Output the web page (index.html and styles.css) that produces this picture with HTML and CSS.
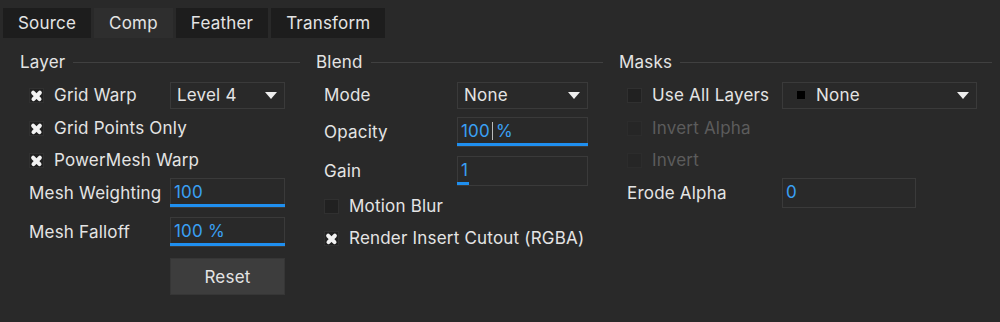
FILE: index.html
```html
<!DOCTYPE html>
<html lang="en">
<head>
    <meta charset="UTF-8">
    <title>Comp</title>
    <link rel="stylesheet" href="styles.css">
</head>
<body>
    <div id="tabs">
        <a href="#" class="tab">Source</a>
        <a href="#" class="tab on">Comp</a>
        <a href="#" class="tab">Feather</a>
        <a href="#" class="tab">Transform</a>
    </div>
    <div id="panel">
        <!-- Layer -->
        <div class="col">
            <div class="head"><span>Layer</span></div>
            <div class="row r-drop">
                <label class="chk"><span class="box x"></span>Grid Warp</label>
                <div class="drop"><span>Level 4</span><i class="arrow"></i></div>
            </div>
            <div class="row r-chk"><label class="chk"><span class="box x"></span>Grid Points Only</label></div>
            <div class="row r-chk"><label class="chk"><span class="box x"></span>PowerMesh Warp</label></div>
            <div class="row r-input">
                <span class="lbl">Mesh Weighting</span>
                <div class="field"><span class="val">100</span><b class="bar full"></b></div>
            </div>
            <div class="row r-input m5">
                <span class="lbl">Mesh Falloff</span>
                <div class="field"><span class="val">100 %</span><b class="bar full"></b></div>
            </div>
            <div class="row r-btn">
                <span class="lbl"></span>
                <button class="btn">Reset</button>
            </div>
        </div>

        <!-- Blend -->
        <div class="col blend">
            <div class="head"><span>Blend</span></div>
            <div class="row r-drop">
                <span class="lbl">Mode</span>
                <div class="drop"><span>None</span><i class="arrow"></i></div>
            </div>
            <div class="row r-input m3">
                <span class="lbl">Opacity</span>
                <div class="field"><span class="val">100<i class="caret"></i>%</span><b class="bar full"></b></div>
            </div>
            <div class="row r-input m5">
                <span class="lbl">Gain</span>
                <div class="field"><span class="val">1</span><b class="bar" style="width:12px"></b></div>
            </div>
            <div class="row r-chk m2"><label class="chk"><span class="box"></span>Motion Blur</label></div>
            <div class="row r-chk"><label class="chk"><span class="box x"></span>Render Insert Cutout (RGBA)</label></div>
        </div>

        <!-- Masks -->
        <div class="col masks">
            <div class="head"><span>Masks</span></div>
            <div class="row r-drop">
                <label class="chk"><span class="box"></span>Use All Layers</label>
                <div class="drop"><i class="swatch"></i><span>None</span><i class="arrow"></i></div>
            </div>
            <div class="row r-chk"><label class="chk off"><span class="box"></span>Invert Alpha</label></div>
            <div class="row r-chk"><label class="chk off"><span class="box"></span>Invert</label></div>
            <div class="row r-input">
                <span class="lbl">Erode Alpha</span>
                <div class="field short"><span class="val">0</span></div>
            </div>
        </div>
    </div>
</body>
</html>
```

FILE: styles.css
```css
* { margin:0; padding:0; box-sizing: border-box;}
body {
    background-color: #292929;
    color: #e4e4e4;
    font-family: Inter, "Open Sans", sans-serif;
    font-size: 17px;
    letter-spacing: 0.2px;
    width: 1000px;
    height: 322px;
    overflow: hidden;
}
#tabs {
    display: flex;
    gap: 3px;
    padding: 8px 0 0 3px;
    height: 38px;
}
.tab {
    display: flex;
    align-items: center;
    padding: 0 15px;
    height: 30px;
    background-color: #1d1d1d;
    color: #e4e4e4;
    text-decoration: none;
}
.tab.on {
    background-color: #2e2e2e;
}
#panel {
    display: grid;
    grid-template-columns: 296px 303px 1fr;
    padding: 12px 0 0 12px;
}
.col {
    display: flex;
    flex-direction: column;
    gap: 4px;
    padding-right: 8px;
}
.head {
    display: flex;
    align-items: center;
    gap: 8px;
    height: 24px;
    padding-left: 8px;
    margin-bottom: 2px;
}
.head::after {
    content: "";
    flex: 1;
    height: 1px;
    background-color: #404040;
}
.row {
    display: flex;
    align-items: center;
    padding-left: 17px;
}
.blend .row, .masks .row { padding-left: 16px;}
.r-drop { height: 30px;}
.r-chk { height: 28px;}
.r-input { height: 30px;}
.r-btn { height: 37px; margin-top: 7px;}
.m2 { margin-top: 2px;}
.m3 { margin-top: 3px;}
.m5 { margin-top: 5px;}

.lbl, .row > .chk {
    width: 141px;
    flex-shrink: 0;
}
.blend .lbl { width: 133px;}
.masks .lbl, .masks .row > .chk { width: 155px;}
.r-chk > .chk { width: auto;}

.chk {
    display: flex;
    align-items: center;
    gap: 10px;
    white-space: nowrap;
}
.chk.off { color: #5c5c5c;}
.box {
    width: 15px;
    height: 15px;
    background-color: #212121;
    border: 1px solid #303030;
    position: relative;
    flex-shrink: 0;
}
.box.x::before, .box.x::after {
    content: "";
    position: absolute;
    left: 0;
    top: 5px;
    width: 13px;
    height: 3.5px;
    border-radius: 2px;
    background-color: #f2f2f2;
    transform: rotate(45deg);
}
.box.x::after { transform: rotate(-45deg);}
.off .box { background-color: #262626; border-color: #2c2c2c;}

.drop {
    display: flex;
    align-items: center;
    width: 115px;
    height: 27px;
    padding: 0 7px 0 6px;
    border: 1px solid #3a3a3a;
}
.blend .drop { width: 131px;}
.masks .drop { width: 195px; padding-left: 14px;}
.drop span { flex: 1;}
.arrow {
    width: 0;
    height: 0;
    border-left: 6px solid transparent;
    border-right: 6px solid transparent;
    border-top: 7px solid #eee;
}
.swatch {
    width: 8px;
    height: 8px;
    background-color: #000;
    margin-right: 11px;
}

.field {
    position: relative;
    width: 115px;
    height: 30px;
    border: 1px solid #3a3a3a;
    padding: 0 3px;
    display: flex;
    align-items: center;
    color: #3aa0f4;
}
.blend .field { width: 131px;}
.field.short { width: 134px;}
.val { display: flex; align-items: center; margin-top: -2px;}
.caret {
    display: inline-block;
    width: 1px;
    height: 18px;
    background-color: #bbb;
    margin: 0 3px 0 2px;
}
.bar {
    position: absolute;
    left: -1px;
    bottom: 0;
    height: 3px;
    background-color: #1f8fef;
}
.bar.full { width: calc(100% + 2px);}

.btn {
    width: 115px;
    height: 37px;
    background-color: #3d3d3d;
    border: 1px solid #363636;
    color: #e4e4e4;
    font-family: inherit;
    font-size: 17px;
    letter-spacing: 0.2px;
}
```
